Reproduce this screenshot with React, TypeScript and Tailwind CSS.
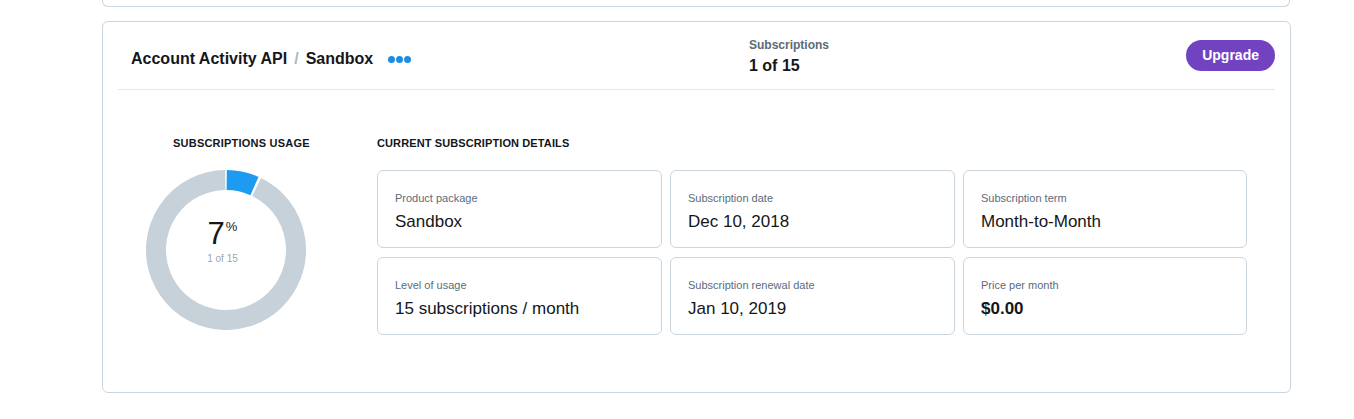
import React from 'react';

const details = [
  { label: 'Product package', value: 'Sandbox' },
  { label: 'Subscription date', value: 'Dec 10, 2018' },
  { label: 'Subscription term', value: 'Month-to-Month' },
  { label: 'Level of usage', value: '15 subscriptions / month' },
  { label: 'Subscription renewal date', value: 'Jan 10, 2019' },
  { label: 'Price per month', value: '$0.00', bold: true },
];

function arc(from: number, to: number, r = 70, c = 80) {
  const pt = (deg: number) => {
    const a = (deg * Math.PI) / 180;
    return [c + r * Math.sin(a), c - r * Math.cos(a)];
  };
  const [x1, y1] = pt(from);
  const [x2, y2] = pt(to);
  const large = to - from > 180 ? 1 : 0;
  return `M ${x1} ${y1} A ${r} ${r} 0 ${large} 1 ${x2} ${y2}`;
}

function UsageDonut({ used, total }: { used: number; total: number }) {
  const deg = (used / total) * 360;
  const pct = Math.round((used / total) * 100);
  return (
    <div className="relative w-[160px] h-[160px]">
      <svg width="160" height="160" viewBox="0 0 160 160">
        <path d={arc(deg + 2, 359.4)} fill="none" stroke="#c6d1d9" strokeWidth="20" />
        <path d={arc(0.6, deg)} fill="none" stroke="#1d9bf0" strokeWidth="20" />
      </svg>
      <div className="absolute inset-0 flex flex-col items-center justify-center pb-[16px] pr-[7px]">
        <div className="flex items-start text-[#14171a] leading-none">
          <span className="text-[31px]">{pct}</span>
          <span className="text-[13px] mt-[2px] ml-[1px]">%</span>
        </div>
        <div className="text-[10px] text-[#9aa8b3] mt-[2px]">{used} of {total}</div>
      </div>
    </div>
  );
}

export default function App() {
  return (
    <div className="min-h-screen bg-white pl-[102px] w-[1354px]" style={{ fontFamily: '"Liberation Sans", Arial, sans-serif' }}>
      {/* Previous card, cut off at the top */}
      <div className="w-[1188px] h-[7px] border-x border-b border-[#cbd5de] rounded-b-[6px]" />

      <div className="mt-[14px] w-[1189px] h-[372px] border border-[#cbd5de] rounded-[6px] px-[15px]">
        {/* Header */}
        <div className="h-[68px] flex items-center border-b border-[#e3e9ee]">
          <div className="w-[631px] pl-[13px] flex items-center pt-[6px]">
            <span className="text-[16px] font-bold text-[#14171a]">Account Activity API</span>
            <span className="text-[16px] font-bold text-[#aab8c2] mx-[7px]">/</span>
            <span className="text-[16px] font-bold text-[#14171a]">Sandbox</span>
            <span className="flex gap-[1px] ml-[15px] mt-[1px]">
              <span className="w-[7px] h-[7px] rounded-full bg-[#1d8de0]" />
              <span className="w-[7px] h-[7px] rounded-full bg-[#1d8de0]" />
              <span className="w-[7px] h-[7px] rounded-full bg-[#1d8de0]" />
            </span>
          </div>
          <div className="flex flex-col pt-[2px]">
            <span className="text-[12px] font-bold text-[#5b6b7a] leading-[18px]">Subscriptions</span>
            <span className="text-[16px] font-bold text-[#14171a] leading-[24px]">1 of 15</span>
          </div>
          <button className="ml-auto h-[31px] px-[16px] rounded-full bg-[#7143c1] text-white text-[14px] font-bold">
            Upgrade
          </button>
        </div>

        {/* Body */}
        <div className="flex pt-[47px]">
          <div className="w-[259px] flex flex-col">
            <div className="pl-[55px] text-[11px] font-bold tracking-[0.02em] text-[#14171a] leading-[12px]">
              SUBSCRIPTIONS USAGE
            </div>
            <div className="pl-[28px] mt-[21px]">
              <UsageDonut used={1} total={15} />
            </div>
          </div>
          <div className="flex flex-col">
            <div className="text-[11px] font-bold tracking-[0.01em] text-[#14171a] leading-[12px]">
              CURRENT SUBSCRIPTION DETAILS
            </div>
            <div className="mt-[21px] grid grid-cols-[285px_285px_284px] gap-x-[8px] gap-y-[9px]">
              {details.map((d) => (
                <div key={d.label} className="h-[78px] border border-[#cbd5de] rounded-[6px] px-[17px] pt-[20px]">
                  <div className="text-[11px] text-[#5b6b7a] leading-[14px]">{d.label}</div>
                  <div className={`mt-[6px] text-[17px] text-[#14171a] leading-[22px] ${d.bold ? 'font-bold' : ''}`}>
                    {d.value}
                  </div>
                </div>
              ))}
            </div>
          </div>
        </div>
      </div>
    </div>
  );
}
